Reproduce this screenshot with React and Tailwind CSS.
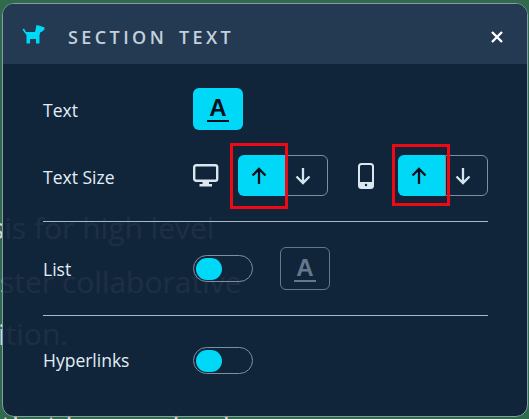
const FONT = { fontFamily: '"Open Sans", "Noto Sans", sans-serif' };

function Dog() {
  return (
    <svg width="24" height="20" viewBox="0 0 24 20" fill="#00d8f8">
      <path d="M0.5 5.5 L2 4.5 L4 8 H13 L14 3.5 L14.5 1 L17 1.5 L22.5 3.5 L22.5 5.5 L19.5 8 H18.5 L17.5 11 V19.5 H14 V15 H8 V19.5 H4.5 V11 L2.5 8.5 Z" />
    </svg>
  );
}

function Arrow({ up, color }) {
  return (
    <svg width="18" height="20" viewBox="0 0 18 20" fill="none" stroke={color} strokeWidth="2.3">
      {up ? (
        <path d="M9 18 V3 M2.5 9.5 L9 3 L15.5 9.5" />
      ) : (
        <path d="M9 2 V17 M2.5 10.5 L9 17 L15.5 10.5" />
      )}
    </svg>
  );
}

function Stepper() {
  return (
    <div className="flex h-[41px]">
      <div className="flex h-full w-[47px] items-center justify-center rounded-l-md bg-[#00d8f8] pr-[5px]">
        <Arrow up color="#050f1a" />
      </div>
      <div className="flex h-full w-[43px] items-center justify-center rounded-r-md border border-[#7f8fa3] pr-[7px]">
        <Arrow color="#d5e5f0" />
      </div>
    </div>
  );
}

function Toggle() {
  return (
    <div className="flex h-[27px] w-[60px] items-center rounded-full border border-[#7f8fa3] pl-[2px]">
      <div className="h-[22px] w-[26px] rounded-full bg-[#00d8f8]" />
    </div>
  );
}

function LetterA({ color }) {
  return (
    <span
      className="border-b-2 px-[2px] text-[24px] font-bold leading-[24px]"
      style={{ color, borderColor: color, fontFamily: '"Liberation Sans", sans-serif' }}
    >
      A
    </span>
  );
}

const PageLine = ({ className, children }) => (
  <div className={`absolute whitespace-nowrap text-[30px] leading-none text-[#d4d4cc] ${className}`}>{children}</div>
);

export default function App() {
  return (
    <div className="relative h-[419px] w-[529px] overflow-hidden bg-[#2f6a4a] pl-[2px] pr-[1px] pt-[3px] pb-[2px]" style={FONT}>
      <PageLine className="left-[-10px] top-[213px]">sis for high level</PageLine>
      <PageLine className="left-[0px] top-[267px]">ster collaborative</PageLine>
      <PageLine className="left-[-2px] top-[319px]">ition.</PageLine>
      <PageLine className="left-[1px] top-[411px]">that has evolved</PageLine>

      <div className="relative h-full w-full overflow-hidden rounded-xl border border-[#8a9aa8] bg-[#0e2038]/92">
        <header className="flex h-[60px] items-center bg-[#233a52] pl-[19px] pr-[24px]">
          <Dog />
          <span className="ml-[22px] mt-[6px] text-[18px] font-semibold tracking-[0.19em] text-[#c5d0dc] [word-spacing:0.2em]">
            SECTION TEXT
          </span>
          <svg className="ml-auto mt-[6px]" width="12" height="12" viewBox="0 0 12 12" stroke="#ffffff" strokeWidth="2.4">
            <path d="M1 1 L11 11 M11 1 L1 11" />
          </svg>
        </header>

        <div className="pl-[40px] pr-[39px] pt-[24px] text-[17.5px] text-[#e2edf5]">
          <div className="flex h-[42px] items-center">
            <span className="w-[150px] pt-[2px]">Text</span>
            <div className="flex h-[42px] w-[50px] items-center justify-center rounded-md bg-[#00d8f8]">
              <LetterA color="#050f1a" />
            </div>
          </div>

          <div className="mt-[25px] flex h-[41px] items-center">
            <span className="w-[150px] pt-[3px]">Text Size</span>
            <svg width="26" height="24" viewBox="0 0 26 24" fill="none">
              <rect x="1.2" y="1.2" width="23" height="15.5" rx="2" stroke="#dbe7f0" strokeWidth="2.4" />
              <path d="M9.5 17 H16 V20 H19 V22.5 H6.5 V20 H9.5 Z" fill="#dbe7f0" />
            </svg>
            <div className="ml-[19px]">
              <Stepper />
            </div>
            <svg className="ml-[30px]" width="16" height="26" viewBox="0 0 16 26" fill="none">
              <rect x="1" y="1" width="14" height="24" rx="2.5" stroke="#dbe7f0" strokeWidth="2" />
              <path d="M1 19 H15 V23 Q15 25 13 25 H3 Q1 25 1 23 Z" fill="#dbe7f0" />
              <circle cx="8" cy="22" r="1.2" fill="#102539" />
            </svg>
            <div className="ml-[24px]">
              <Stepper />
            </div>
          </div>

          <div className="mt-[25px] h-px bg-[#a9b8c8]" />

          <div className="mt-[25px] flex h-[43px] items-center">
            <span className="w-[150px] pt-[2px]">List</span>
            <Toggle />
            <div className="ml-[27px] flex h-[43px] w-[50px] items-center justify-center rounded-md border border-[#65778c]">
              <LetterA color="#65778c" />
            </div>
          </div>

          <div className="mt-[25px] h-px bg-[#a9b8c8]" />

          <div className="mt-[31px] flex h-[27px] items-center">
            <span className="w-[150px]">Hyperlinks</span>
            <Toggle />
          </div>
        </div>

        <div className="absolute left-[227px] top-[139px] h-[66px] w-[58px] border-[3px] border-[#ee0a12]" />
        <div className="absolute left-[389px] top-[140px] h-[62px] w-[58px] border-[3px] border-[#ee0a12]" />
      </div>
    </div>
  );
}
